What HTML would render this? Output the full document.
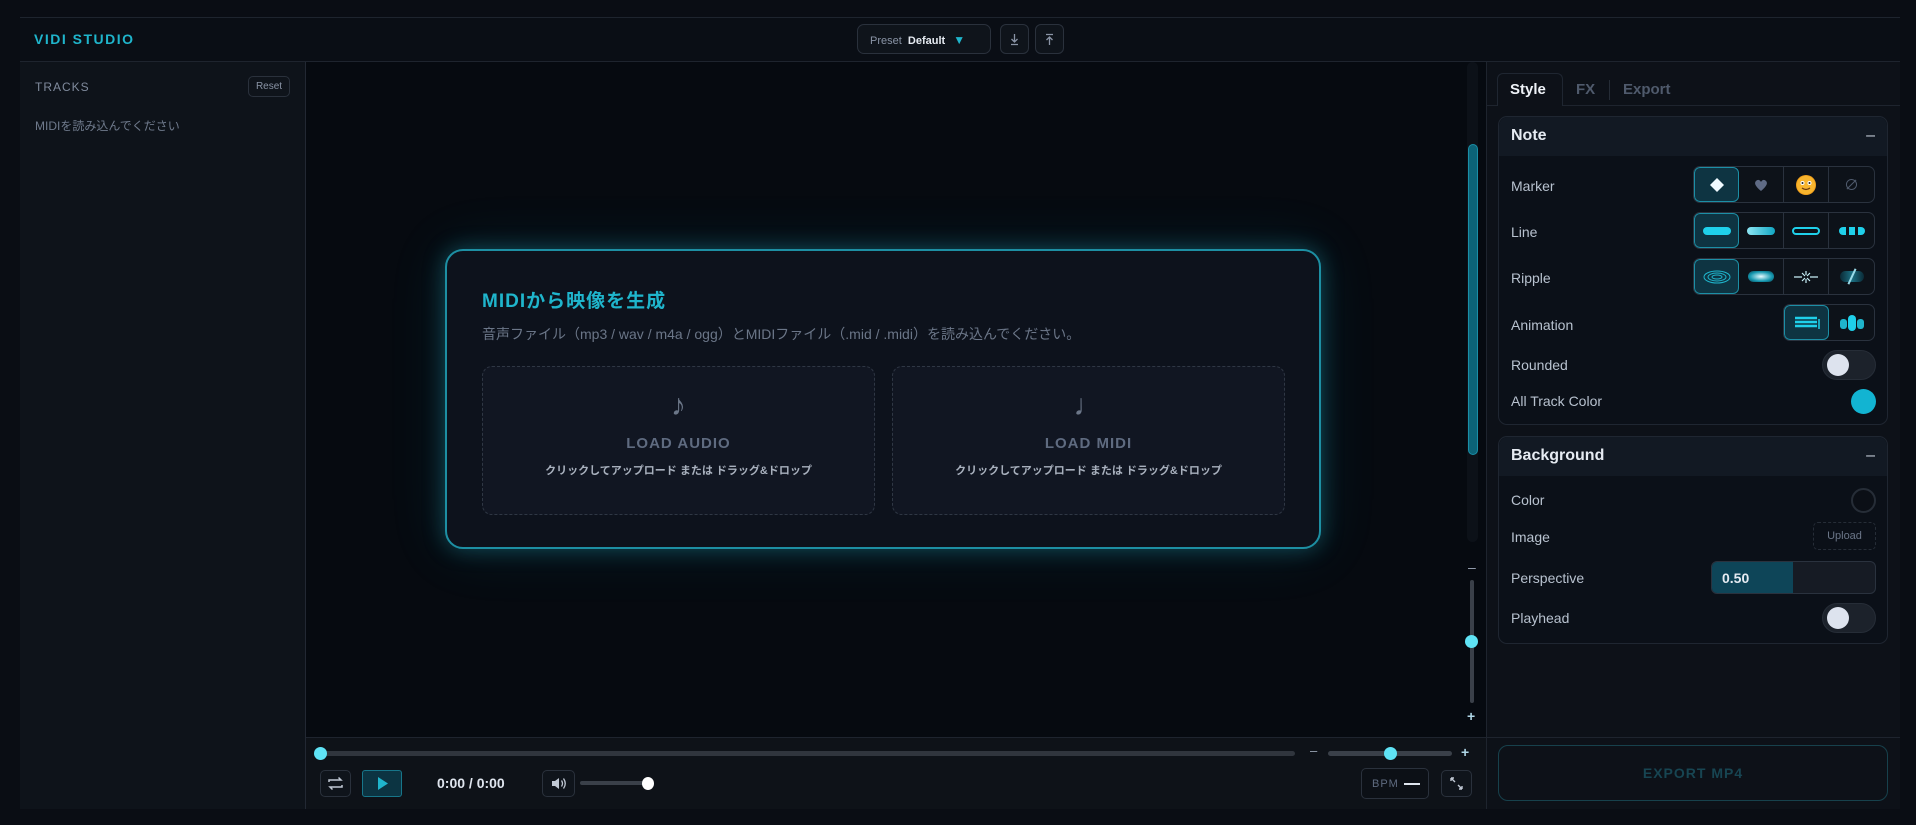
<!DOCTYPE html>
<html><head><meta charset="utf-8"><style>
*{box-sizing:border-box;margin:0;padding:0}
body{width:1916px;height:825px;background:#0a0d14;font-family:"Liberation Sans","Noto Sans CJK JP",sans-serif;position:relative;overflow:hidden;color:#c8d0dc}
.a{position:absolute}
.frame{left:20px;top:17px;width:1880px;height:792px;border:1px solid #1c222c;background:#0b0f16}
.hdr{left:20px;top:17px;width:1880px;height:45px;border-bottom:1px solid #1e242e;border-top:1px solid #1e242e;background:#0a0e15}
.side{left:20px;top:62px;width:286px;height:747px;background:#0e131a;border-right:1px solid #222833}
.canvas{left:306px;top:62px;width:1180px;height:675px;background:#060a10}
.trans{left:306px;top:737px;width:1180px;height:72px;background:#0e1218;border-top:1px solid #1e242e}
.right{left:1486px;top:62px;width:414px;height:747px;background:#0d1118;border-left:1px solid #1e242e}
.btn{border:1px solid #2a313c;border-radius:5px;background:#0f141b}
.sec{left:1498px;width:390px;border:1px solid #1f2631;border-radius:9px;background:#0b1018}
.sech{left:0;top:0;right:0;height:39px;background:#121923;border-radius:9px 9px 0 0;font-weight:bold;font-size:16px;color:#e6ebf2;padding:10px 12px}
.lbl{left:12px;font-size:14px;color:#b8c2cf}
.grp{display:flex;border:1px solid #2a323e;border-radius:7px;overflow:hidden;height:37px;background:#0d1219}
.grp div{width:45px;border-right:1px solid #2a323e;display:flex;align-items:center;justify-content:center}
.grp div:last-child{border-right:none}
.grp .on{background:#0e3442;border:1px solid #1c8fa6;border-radius:6px}
.tog{width:54px;height:30px;border-radius:15px;background:#1c222b;border:1px solid #262d37}
.tog i{position:absolute;left:4px;top:3px;width:22px;height:22px;border-radius:50%;background:#dde3ee}
.knob{width:13px;height:13px;border-radius:50%;background:#5fe3f5}
</style></head><body>
<div class="a frame"></div>
<div class="a hdr"></div>
<div class="a" style="left:34px;top:31px;font-size:14px;font-weight:bold;letter-spacing:1.5px;color:#1fb5cc">VIDI STUDIO</div>
<div class="a btn" style="left:857px;top:24px;width:134px;height:30px;border-radius:7px;font-size:11px;padding:8px 12px;color:#8a94a6">Preset&nbsp;&nbsp;<b style="color:#e6ebf2">Default</b><span style="color:#1fb5cc;font-size:12px;margin-left:8px">▼</span></div>
<div class="a btn" style="left:1000px;top:24px;width:29px;height:30px;border-radius:6px"><svg width="27" height="28"><path d="M13.5 9v8M10.5 14l3 3 3-3M10 19.5h7" stroke="#8a94a6" stroke-width="1.3" fill="none"/></svg></div>
<div class="a btn" style="left:1035px;top:24px;width:29px;height:30px;border-radius:6px"><svg width="27" height="28"><path d="M13.5 12v8M10.5 15l3-3 3 3M10 9.5h7" stroke="#8a94a6" stroke-width="1.3" fill="none"/></svg></div>

<div class="a side"></div>
<div class="a" style="left:35px;top:80px;font-size:12px;letter-spacing:1px;color:#7f8a9c">TRACKS</div>
<div class="a btn" style="left:248px;top:76px;width:42px;height:21px;font-size:10px;color:#8a94a6;text-align:center;line-height:19px">Reset</div>
<div class="a" style="left:35px;top:117px;font-size:12px;color:#6f7a8c">MIDIを読み込んでください</div>

<div class="a canvas"></div>
<div class="a" style="left:1467px;top:62px;width:11px;height:480px;background:#0c1118;border-radius:6px"></div>
<div class="a" style="left:1468px;top:144px;width:10px;height:311px;background:#0c6377;border-radius:5px;border:1px solid #1a8ea6"></div>
<div class="a" style="left:1468px;top:559px;font-size:14px;color:#9aa4b4">–</div>
<div class="a" style="left:1470px;top:580px;width:4px;height:123px;background:#3a4049;border-radius:2px"></div>
<div class="a knob" style="left:1465px;top:635px"></div>
<div class="a" style="left:1467px;top:708px;font-size:14px;color:#b0d8e8;font-weight:bold">+</div>

<div class="a" style="left:445px;top:249px;width:876px;height:300px;border:2px solid #1d8fa3;border-radius:18px;background:#0d121c;box-shadow:0 0 22px rgba(31,181,204,.35),0 0 60px rgba(31,181,204,.12)"></div>
<div class="a" style="left:482px;top:286px;font-size:19px;font-weight:bold;letter-spacing:1px;color:#1fb5cc">MIDIから映像を生成</div>
<div class="a" style="left:482px;top:324px;font-size:14px;color:#6b7688">音声ファイル（mp3 / wav / m4a / ogg）とMIDIファイル（.mid / .midi）を読み込んでください。</div>
<div class="a" style="left:482px;top:366px;width:393px;height:149px;border:1px dashed #2f3744;border-radius:10px;background:#111622;text-align:center">
<div style="margin-top:22px;font-size:30px;color:#6b7688;line-height:34px">♪</div>
<div style="margin-top:12px;font-size:15px;font-weight:bold;letter-spacing:1px;color:#5f6b80">LOAD AUDIO</div>
<div style="margin-top:10px;font-size:11px;font-weight:bold;color:#a8b0bd">クリックしてアップロード または ドラッグ&amp;ドロップ</div></div>
<div class="a" style="left:892px;top:366px;width:393px;height:149px;border:1px dashed #2f3744;border-radius:10px;background:#111622;text-align:center">
<div style="margin-top:22px;font-size:30px;color:#6b7688;line-height:34px">♩</div>
<div style="margin-top:12px;font-size:15px;font-weight:bold;letter-spacing:1px;color:#5f6b80">LOAD MIDI</div>
<div style="margin-top:10px;font-size:11px;font-weight:bold;color:#a8b0bd">クリックしてアップロード または ドラッグ&amp;ドロップ</div></div>

<div class="a trans"></div>
<div class="a" style="left:320px;top:751px;width:975px;height:5px;background:#30353d;border-radius:3px"></div>
<div class="a knob" style="left:314px;top:747px"></div>
<div class="a" style="left:1310px;top:743px;font-size:13px;color:#9aa4b4">–</div>
<div class="a" style="left:1328px;top:751px;width:124px;height:5px;background:#3a4049;border-radius:3px"></div>
<div class="a knob" style="left:1384px;top:747px"></div>
<div class="a" style="left:1461px;top:744px;font-size:14px;font-weight:bold;color:#b0d8e8">+</div>
<div class="a btn" style="left:320px;top:770px;width:31px;height:27px"><svg width="29" height="25"><path d="M8 11v-2h12l-2.5-2.5M21 14v2H9l2.5 2.5" stroke="#c0c8d4" stroke-width="1.5" fill="none"/></svg></div>
<div class="a" style="left:362px;top:770px;width:40px;height:27px;background:#0c3442;border:1px solid #17768a;border-radius:3px"><svg width="38" height="25"><path d="M15 6l10 6.5-10 6.5z" fill="#1fb5cc"/></svg></div>
<div class="a" style="left:437px;top:775px;font-size:14px;font-weight:bold;color:#dfe5ee">0:00 / 0:00</div>
<div class="a btn" style="left:542px;top:770px;width:33px;height:27px"><svg width="31" height="25"><path d="M9 10h3l4-3v11l-4-3H9z" fill="#c0c8d4"/><path d="M18.5 9.5q2 3 0 6M20.5 7.5q3.5 5 0 10" stroke="#c0c8d4" stroke-width="1.3" fill="none"/></svg></div>
<div class="a" style="left:580px;top:781px;width:66px;height:4px;background:#3a4049;border-radius:2px"></div>
<div class="a" style="left:642px;top:777px;width:12px;height:13px;border-radius:50%;background:#fff"></div>
<div class="a btn" style="left:1361px;top:768px;width:68px;height:31px;background:#0c1016"><span class="a" style="left:10px;top:9px;font-size:11px;letter-spacing:1px;color:#5f6b80">BPM</span><span class="a" style="left:42px;top:14px;width:16px;height:2px;background:#dfe5ee"></span></div>
<div class="a btn" style="left:1441px;top:770px;width:31px;height:27px"><svg width="29" height="25"><path d="M9 7l4 4M9 7h3M9 7v3M20 18l-4-4M20 18h-3M20 18v-3" stroke="#c0c8d4" stroke-width="1.4" fill="none"/></svg></div>

<div class="a right"></div>
<div class="a" style="left:1486px;top:105px;width:414px;height:1px;background:#1e242e"></div>
<div class="a" style="left:1497px;top:73px;width:66px;height:33px;border:1px solid #1f2631;border-bottom:none;border-radius:6px 6px 0 0;background:#0d1118"></div>
<div class="a" style="left:1510px;top:81px;font-size:15px;font-weight:bold;color:#eef2f7">Style</div>
<div class="a" style="left:1576px;top:81px;font-size:15px;font-weight:bold;color:#4f5a6c">FX</div>
<div class="a" style="left:1609px;top:80px;width:1px;height:20px;background:#252c36"></div>
<div class="a" style="left:1623px;top:81px;font-size:15px;font-weight:bold;color:#4f5a6c">Export</div>

<div class="a sec" style="top:116px;height:309px">
<div class="a sech">Note<span style="float:right;font-weight:normal;color:#c8d0dc">–</span></div>
<div class="a lbl" style="top:61px">Marker</div>
<div class="a grp" style="left:194px;top:49px"><div class="on"><svg width="16" height="16"><path d="M8 1l7 7-7 7-7-7z" fill="#f0faff"/></svg></div><div><svg width="16" height="16"><path d="M8 14C2 9 1 6 3 4s4-1 5 1c1-2 3-3 5-1s1 5-5 10z" fill="#5f6b85"/></svg></div><div><svg width="22" height="22"><circle cx="11" cy="11" r="10" fill="#f4a21c"/><circle cx="11" cy="11" r="9" fill="#f8b52e"/><circle cx="7.5" cy="9" r="2" fill="#fff"/><circle cx="14.5" cy="9" r="2" fill="#fff"/><circle cx="7.5" cy="9" r="1" fill="#222"/><circle cx="14.5" cy="9" r="1" fill="#222"/><path d="M7 14q4 3 8 0" stroke="#6b3a10" stroke-width="1.2" fill="none"/></svg></div><div style="color:#4f5a6c;font-size:15px">∅</div></div>
<div class="a lbl" style="top:107px">Line</div>
<div class="a grp" style="left:194px;top:95px"><div class="on"><div style="width:28px;height:8px;border-radius:4px;background:#1fd0ea;border:none"></div></div><div><div style="width:28px;height:8px;border-radius:4px;background:linear-gradient(90deg,#8ee6f4,#11a6c2);border:none"></div></div><div><div style="width:28px;height:8px;border-radius:4px;border:2px solid #1fd0ea"></div></div><div><div style="width:26px;height:8px;border-radius:4px;background:linear-gradient(90deg,#1fd0ea 0 7px,transparent 7px 10px,#1fd0ea 10px 16px,transparent 16px 19px,#1fd0ea 19px);border:none"></div></div></div>
<div class="a lbl" style="top:153px">Ripple</div>
<div class="a grp" style="left:194px;top:141px"><div class="on"><svg width="30" height="14"><ellipse cx="15" cy="7" rx="13" ry="6" stroke="#1fb5cc" fill="none"/><ellipse cx="15" cy="7" rx="9" ry="4" stroke="#1fb5cc" fill="none"/><ellipse cx="15" cy="7" rx="5" ry="2" stroke="#1fb5cc" fill="none"/></svg></div><div><div style="width:26px;height:11px;border-radius:6px;background:radial-gradient(#e6fbff,#1598b0 60%,#0b3e4c);border:none"></div></div><div><svg width="26" height="14"><path d="M1 7h8M17 7h8M13 1v4M13 9v4M9 3l3 3M17 11l-3-3M9 11l3-3M17 3l-3 3" stroke="#c8f0f8" stroke-width="1.2"/></svg></div><div><div style="width:24px;height:11px;border-radius:6px;background:linear-gradient(90deg,#0b2a36,#1b6f82,#0b2a36);border:none;position:relative"><i style="position:absolute;left:11px;top:-3px;width:2px;height:17px;background:#9adbe8;transform:rotate(25deg)"></i></div></div></div>
<div class="a lbl" style="top:200px">Animation</div>
<div class="a grp" style="left:284px;top:187px"><div class="on"><svg width="30" height="18"><path d="M3 4h22M3 8h22M3 12h22" stroke="#1fd0ea" stroke-width="2.5"/><path d="M27 5v10" stroke="#1fd0ea" stroke-width="1.5"/></svg></div><div><svg width="28" height="20"><rect x="2" y="6" width="7" height="10" rx="3" fill="#1fb5cc"/><rect x="10" y="2" width="8" height="16" rx="4" fill="#1fd0ea"/><rect x="19" y="6" width="7" height="10" rx="3" fill="#1fb5cc"/></svg></div></div>
<div class="a lbl" style="top:240px">Rounded</div>
<div class="a tog" style="left:323px;top:233px"><i></i></div>
<div class="a lbl" style="top:276px">All Track Color</div>
<div class="a" style="left:352px;top:272px;width:25px;height:25px;border-radius:50%;background:#12b4d2"></div>
</div>

<div class="a sec" style="top:436px;height:208px">
<div class="a sech">Background<span style="float:right;font-weight:normal;color:#c8d0dc">–</span></div>
<div class="a lbl" style="top:55px">Color</div>
<div class="a" style="left:352px;top:51px;width:25px;height:25px;border-radius:50%;border:2px solid #262d37;background:#0b0f16"></div>
<div class="a lbl" style="top:92px">Image</div>
<div class="a" style="left:314px;top:85px;width:63px;height:28px;border:1px dashed #262d37;border-radius:5px;font-size:11px;color:#6b7688;text-align:center;line-height:26px">Upload</div>
<div class="a lbl" style="top:133px">Perspective</div>
<div class="a" style="left:212px;top:124px;width:165px;height:33px;border:1px solid #2a323e;border-radius:6px;background:#161b24;overflow:hidden"><div style="width:81px;height:100%;background:#0e4558"></div><span class="a" style="left:10px;top:8px;font-size:14px;font-weight:bold;color:#e6ebf2">0.50</span></div>
<div class="a lbl" style="top:173px">Playhead</div>
<div class="a tog" style="left:323px;top:166px"><i></i></div>
</div>

<div class="a" style="left:1486px;top:737px;width:414px;height:1px;background:#1e242e"></div>
<div class="a" style="left:1498px;top:745px;width:390px;height:56px;border:1px solid #17414c;border-radius:10px;text-align:center;line-height:54px;font-size:14px;font-weight:bold;letter-spacing:1px;color:#174552">EXPORT MP4</div>
</body></html>
